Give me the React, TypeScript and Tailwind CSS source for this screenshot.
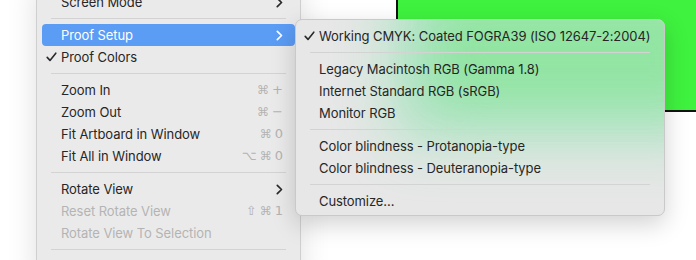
import React from "react";

type Item =
  | { kind: "sep" }
  | {
      kind: "item";
      label: string;
      check?: boolean;
      sub?: boolean;
      shortcut?: string;
      disabled?: boolean;
      active?: boolean;
    };

const Check = ({ white }: { white?: boolean }) => (
  <svg width="11" height="10" viewBox="0 0 11 10" className="shrink-0">
    <path
      d="M1.2 5.4 L4 8.4 L9.8 1.2"
      fill="none"
      stroke={white ? "#fff" : "#2a2a2a"}
      strokeWidth="1.6"
      strokeLinecap="round"
      strokeLinejoin="round"
    />
  </svg>
);

const Chevron = ({ white }: { white?: boolean }) => (
  <svg width="7" height="11" viewBox="0 0 7 11" className="shrink-0">
    <path
      d="M1.3 1.3 L5.5 5.5 L1.3 9.7"
      fill="none"
      stroke={white ? "#fff" : "#2a2a2a"}
      strokeWidth="1.7"
      strokeLinecap="round"
      strokeLinejoin="round"
    />
  </svg>
);

const mainItems: Item[] = [
  { kind: "item", label: "Screen Mode", sub: true },
  { kind: "sep" },
  { kind: "item", label: "Proof Setup", sub: true, active: true },
  { kind: "item", label: "Proof Colors", check: true },
  { kind: "sep" },
  { kind: "item", label: "Zoom In", shortcut: "⌘+" },
  { kind: "item", label: "Zoom Out", shortcut: "⌘−" },
  { kind: "item", label: "Fit Artboard in Window", shortcut: "⌘0" },
  { kind: "item", label: "Fit All in Window", shortcut: "⌥⌘0" },
  { kind: "sep" },
  { kind: "item", label: "Rotate View", sub: true },
  { kind: "item", label: "Reset Rotate View", shortcut: "⇧⌘1", disabled: true },
  { kind: "item", label: "Rotate View To Selection", disabled: true },
  { kind: "sep" },
];

const subItems: Item[] = [
  { kind: "item", label: "Working CMYK: Coated FOGRA39 (ISO 12647-2:2004)", check: true },
  { kind: "sep" },
  { kind: "item", label: "Legacy Macintosh RGB (Gamma 1.8)" },
  { kind: "item", label: "Internet Standard RGB (sRGB)" },
  { kind: "item", label: "Monitor RGB" },
  { kind: "sep" },
  { kind: "item", label: "Color blindness - Protanopia-type" },
  { kind: "item", label: "Color blindness - Deuteranopia-type" },
  { kind: "sep" },
  { kind: "item", label: "Customize..." },
];

function Shortcut({ text }: { text: string }) {
  return (
    <span className="flex items-center gap-[3px] text-[#b3b3b3] text-[13px] font-['DejaVu_Sans',sans-serif]">
      {Array.from(text).map((c, i) => (
        <span key={i} className={c === "⌘" ? "text-[12px]" : ""}>
          {c}
        </span>
      ))}
    </span>
  );
}

function Row({ item, slot }: { item: Item; slot: string }) {
  if (item.kind === "sep") {
    return (
      <div className="h-[11px] flex items-center px-[9px]">
        <div className="h-px w-full bg-[#d3d3d3]" />
      </div>
    );
  }
  const textColor = item.active
    ? "text-white"
    : item.disabled
    ? "text-[#b4b4b4]"
    : "text-[#262626]";
  return (
    <div
      className={`h-[22px] flex items-center pr-[12px] rounded-[4px] ${slot} ${
        item.active ? "bg-[#5b9cf5]" : ""
      } ${textColor}`}
    >
      <span className="w-[15px] shrink-0 flex items-center">
        {item.check && <Check white={item.active} />}
      </span>
      <span className="flex-1 whitespace-nowrap text-[13px] leading-none tracking-[-0.08px]">
        {item.label}
      </span>
      {item.shortcut && <Shortcut text={item.shortcut} />}
      {item.sub && <Chevron white={item.active} />}
    </div>
  );
}

export default function App() {
  return (
    <div className="relative w-[696px] h-[260px] overflow-hidden bg-white font-['Inter',sans-serif]">
      {/* canvas artboard */}
      <div className="absolute left-[396px] top-[-4px] w-[320px] h-[116px] bg-[#3ff23f] border-2 border-[#111]" />

      {/* main menu */}
      <div className="absolute left-[36px] top-[-14px] w-[265px] h-[300px] bg-[#ebeaea] border-x border-[#cfcfcf] p-[5px] shadow-[0_0_28px_rgba(0,0,0,0.13)]">
        {mainItems.map((it, i) => (
          <Row key={i} item={it} slot="pl-[4px]" />
        ))}
      </div>

      {/* submenu */}
      <div className="absolute left-[295px] top-[19px] w-[370px] h-[197px] rounded-[7px] border border-[#c9c9c9] bg-[#e7e7e7] overflow-hidden shadow-[0_8px_24px_rgba(0,0,0,0.18)]">
        <div className="absolute left-[95px] top-[-40px] w-[330px] h-[160px] bg-[#4fe08a] opacity-40 blur-[30px]" />
        <div className="absolute left-[140px] top-[-40px] w-[300px] h-[125px] bg-[#5fe85f] opacity-30 blur-[24px]" />
        <div className="relative flex flex-col p-[5px]">
          {subItems.map((it, i) => (
            <Row key={i} item={it} slot="pl-[3px]" />
          ))}
        </div>
      </div>
    </div>
  );
}
